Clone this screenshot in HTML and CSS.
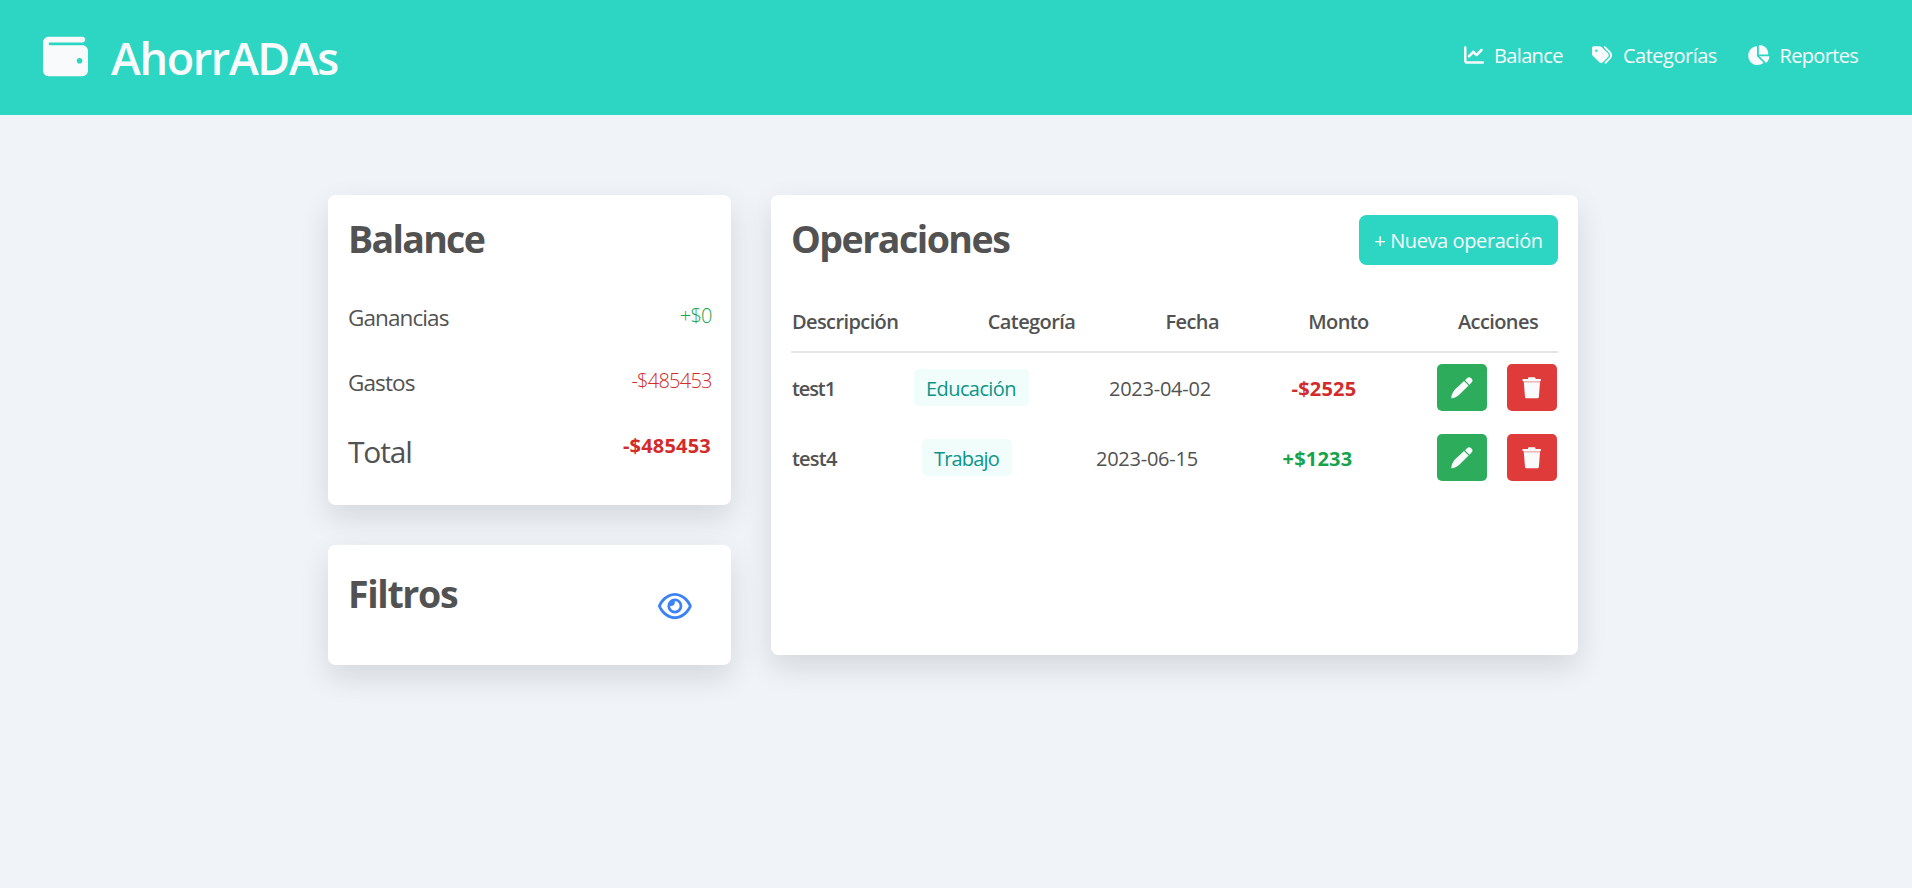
FILE: index.html
```html
<!DOCTYPE html>
<html lang="es">
<head>
<meta charset="utf-8">
<title>AhorrADAs</title>
<link rel="stylesheet" href="styles.css">
</head>
<body>
<svg class="sprite" aria-hidden="true">
  <symbol id="pencil" viewBox="0 0 22 22"><path d="M.3 21.2C.3 18.400 1.600 15.800 3.400 13.100L13 4 17.600 8.600 8 18.100C5.600 20.100 3 21.400.3 21.200zM14 3.200l2-2Q18-.8 20 1.100l.7.7Q22.400 3.700 20.600 5.500l-2.200 2.300z"/></symbol>
  <symbol id="trash" viewBox="0 0 20 22"><path d="M6 2V1.200Q6 .2 7 .2h5.500q1 0 1 1V2h4.600q1 0 1 1t-1 1H1.300q-1 0-1-1t1-1zM1.800 5.200h16.200l-1.100 14.500q-.1 1.500-1.600 1.500H4.600q-1.500 0-1.600-1.500z"/><path opacity=".65" d="M1.500 4h16.700v1.300H1.500z"/></symbol>
</svg>
<header class="header">
  <div class="brand">
    <svg class="brand-icon" viewBox="0 0 512 512"><path d="M64 32C28.700 32 0 60.700 0 96V416c0 35.300 28.700 64 64 64H448c35.300 0 64-28.700 64-64V192c0-35.300-28.700-64-64-64H80c-8.800 0-16-7.200-16-16s7.200-16 16-16H448c17.700 0 32-14.300 32-32s-14.300-32-32-32H64zM416 272a32 32 0 1 1 0 64 32 32 0 1 1 0-64z"/></svg>
    <h1 class="brand-name">AhorrADAs</h1>
  </div>
  <nav class="nav">
    <a class="nav-link nav-balance"><svg class="nav-icon" viewBox="0 0 512 512"><path d="M64 64c0-17.700-14.300-32-32-32S0 46.300 0 64V400c0 44.200 35.800 80 80 80H480c17.700 0 32-14.300 32-32s-14.300-32-32-32H80c-8.800 0-16-7.200-16-16V64zm406.600 86.600c12.500-12.500 12.500-32.800 0-45.300s-32.800-12.500-45.300 0L320 210.700l-57.400-57.400c-12.500-12.500-32.800-12.500-45.300 0l-112 112c-12.500 12.500-12.500 32.800 0 45.300s32.800 12.500 45.300 0L240 221.300l57.400 57.400c12.500 12.500 32.800 12.500 45.300 0l128-128z"/></svg><span>Balance</span></a>
    <a class="nav-link nav-categories"><svg class="nav-icon" viewBox="0 0 512 512"><path d="M345 39.100L472.800 168.400c52.400 53 52.400 138.200 0 191.200L360.800 472.900c-9.300 9.400-24.500 9.500-33.900 .2s-9.500-24.500-.2-33.900L438.600 325.900c33.900-34.300 33.900-89.400 0-123.700L310.900 72.900c-9.300-9.400-9.200-24.600 .2-33.900s24.600-9.200 33.900 .2zM0 229.500V80C0 53.500 21.500 32 48 32H197.500c17 0 33.300 6.700 45.300 18.700l168 168c25 25 25 65.500 0 90.500L277.300 442.700c-25 25-65.500 25-90.500 0l-168-168C6.700 262.700 0 246.500 0 229.500zM144 144a32 32 0 1 0 -64 0 32 32 0 1 0 64 0z"/></svg><span>Categorías</span></a>
    <a class="nav-link nav-reports"><svg class="nav-icon nav-icon-wide" viewBox="0 0 576 512"><path d="M304 240V16.600c0-9 7-16.600 16-16.600C443.700 0 544 100.300 544 224c0 9-7.600 16-16.600 16H304zM32 272C32 150.700 122.100 50.300 239 34.300c9.200-1.300 17 6.100 17 15.400V288L412.500 444.500c6.700 6.700 6.200 17.700-1.500 23.100C371.800 495.600 323.800 512 272 512C139.500 512 32 404.600 32 272zm526.400 16c9.300 0 16.600 7.800 15.400 17c-7.700 55.900-34.600 105.600-73.900 142.300c-6 5.600-15.400 5.200-21.200-.7L320 288H558.400z"/></svg><span>Reportes</span></a>
  </nav>
</header>
<main class="main">
  <div class="sidebar">
    <section class="card balance">
      <h2 class="title title-balance">Balance</h2>
      <div class="balance-row"><span class="label earnings">Ganancias</span><span class="amount light gain">+$0</span></div>
      <div class="balance-row"><span class="label expenses">Gastos</span><span class="amount light loss">-$485453</span></div>
      <div class="balance-row total-row"><span class="total">Total</span><span class="amount strong loss">-$485453</span></div>
    </section>
    <section class="card filters">
      <h2 class="title title-filters">Filtros</h2>
      <svg class="eye" viewBox="0 0 576 512"><path d="M288 80c-65.200 0-118.800 29.600-159.900 67.700C89.600 183.500 63 226 49.400 256c13.600 30 40.200 72.500 78.600 108.300C169.200 402.400 222.800 432 288 432s118.800-29.600 159.900-67.700C486.400 328.500 513 286 526.600 256c-13.600-30-40.200-72.500-78.600-108.300C406.800 109.600 353.200 80 288 80zM95.400 112.600C142.500 68.800 207.200 32 288 32s145.500 36.800 192.600 80.600c46.800 43.500 78.100 95.400 93 131.100c3.300 7.900 3.300 16.700 0 24.600c-14.900 35.700-46.200 87.700-93 131.100C433.500 443.200 368.800 480 288 480s-145.500-36.800-192.600-80.600C48.600 356 17.300 304 2.500 268.300c-3.300-7.900-3.300-16.700 0-24.600C17.300 208 48.600 156 95.400 112.600zM288 336c44.200 0 80-35.800 80-80s-35.800-80-80-80c-.7 0-1.300 0-2 0c1.300 5.100 2 10.500 2 16c0 35.300-28.700 64-64 64c-5.500 0-10.900-.7-16-2c0 .7 0 1.300 0 2c0 44.200 35.800 80 80 80zm0-208a128 128 0 1 1 0 256 128 128 0 1 1 0-256z"/></svg>
    </section>
  </div>
  <section class="card operations">
    <div class="operations-head">
      <h2 class="title title-operations">Operaciones</h2>
      <button class="new-button"><span>+ Nueva operación</span></button>
    </div>
    <div class="table-head">
      <span class="col-description">Descripción</span><span class="col-category">Categoría</span><span class="col-date">Fecha</span><span class="col-amount">Monto</span><span class="col-actions">Acciones</span>
    </div>
    <div class="table-row">
      <span class="name name-first">test1</span>
      <span class="tag tag-education"><span>Educación</span></span>
      <span class="date">2023-04-02</span>
      <span class="value value-loss loss">-$2525</span>
      <span class="actions"><button class="action edit"><svg class="pencil-icon"><use href="#pencil"/></svg></button><button class="action delete"><svg class="trash-icon"><use href="#trash"/></svg></button></span>
    </div>
    <div class="table-row">
      <span class="name name-second">test4</span>
      <span class="tag tag-work"><span>Trabajo</span></span>
      <span class="date">2023-06-15</span>
      <span class="value value-gain gain">+$1233</span>
      <span class="actions"><button class="action edit"><svg class="pencil-icon"><use href="#pencil"/></svg></button><button class="action delete"><svg class="trash-icon"><use href="#trash"/></svg></button></span>
    </div>
  </section>
</main>
</body>
</html>
```
FILE: styles.css
```css
* { box-sizing: border-box; }
body { margin: 0; min-height: 100vh; background: #f0f4f9; color: #525252; font: 400 20px/30px "Open Sans", "Noto Sans", sans-serif; }
h1, h2 { margin: 0; }
svg { display: block; fill: currentColor; flex: none; }
button { border: 0; padding: 0; font: inherit; color: #f8fafc; }
span { white-space: nowrap; }
.sprite { display: none; }

.header { height: 115px; padding: 0 53px 0 43px; display: flex; justify-content: space-between; background: #2dd6c2; color: #f8fafc; }
.brand { display: flex; gap: 23px; padding-top: 34px; }
.brand-icon { width: 45px; height: 45px; }
.brand-name { font-size: 45px; line-height: 50px; margin-top: -1px; font-weight: 600; letter-spacing: -1.35px; }
.nav { display: flex; padding-top: 40px; gap: 30px; }
.nav-link { display: flex; gap: 10px; }
.nav-link span { letter-spacing: -.65px; margin-top: 1px; }
.nav-categories span { letter-spacing: -.5px; margin-left: 1px; }
.nav-icon { width: 20px; height: 20px; margin-top: 5px; }
.nav-icon-wide { width: 22.5px; }
.nav-balance { width: 98px; }
.nav-categories { width: 125px; }
.nav-reports { width: 112px; }

.main { width: 1250px; margin: 80px 0 0 328px; display: flex; gap: 40px; align-items: flex-start; }
.sidebar { width: 403px; display: flex; flex-direction: column; gap: 40px; }
.card { background: #fff; border-radius: 7.5px; padding: 20px; box-shadow: 0 12px 30px rgba(0, 0, 0, .12); }
.title { font-size: 37.5px; line-height: 47px; font-weight: 700; }
.balance { height: 310px; }
.title-balance { margin-bottom: 38px; letter-spacing: -1.7px; }
.title-filters { letter-spacing: -1.35px; }
.title-operations { letter-spacing: -1.5px; }
.balance-row { display: flex; justify-content: space-between; height: 65px; }
.label { font-size: 22.5px; line-height: 35px; letter-spacing: -.9px; }
.total { font-size: 30px; line-height: 43px; letter-spacing: -1.2px; }
.amount { padding-top: 1px; }
.light { font-weight: 300; letter-spacing: -.75px; margin-right: -.75px; }
.strong, .value { font-weight: 700; letter-spacing: .2px; }
.gain { color: #16a34a; }
.loss { color: #d32a2a; }
.filters { height: 120px; display: flex; justify-content: space-between; padding: 25px 39px 20px 20px; }
.eye { width: 33.75px; height: 30px; margin-top: 21px; color: #3b82f6; }

.operations { width: 807px; height: 460px; }
.operations-head { display: flex; justify-content: space-between; height: 50px; }
.new-button { width: 199px; height: 50px; padding-top: 2px; border-radius: 7.5px; background: #2dd6c2; }
.new-button span { letter-spacing: -.4px; }
.table-head { display: flex; justify-content: space-between; margin-top: 30px; height: 58px; padding: 12px 19px 0 1px; border-bottom: 2px solid #e5e5e5; font-weight: 600; letter-spacing: -.6px; }
.col-description { width: 106px; }
.col-category { width: 88px; }
.col-date { width: 53px; }
.col-amount { width: 60px; }
.col-actions { width: 81px; }
.table-row { display: flex; align-items: center; justify-content: space-between; height: 47px; margin-top: 11px; padding: 0 1px; }
.table-row + .table-row { margin-top: 23px; }
.name { font-weight: 600; letter-spacing: -1.1px; }
.name, .date, .value { padding-top: 2px; }
.name-first { width: 41px; }
.name-second { width: 45px; letter-spacing: -.8px; }
.tag { height: 37px; padding-top: 2px; border-radius: 5px; background: #f0fdfa; color: #0d9488; display: flex; align-items: center; justify-content: center; }
.tag-education { width: 115px; letter-spacing: -.6px; }
.tag-work { width: 90px; letter-spacing: -.8px; }
.date { width: 102px; letter-spacing: -.25px; }
.value-loss { width: 65px; }
.value-gain { width: 70px; }
.actions { display: flex; gap: 20px; }
.action { width: 50px; height: 47px; border-radius: 5px; display: flex; align-items: center; justify-content: center; }
.edit { background: #2dac5c; }
.delete { background: #df3b3b; }
.pencil-icon { width: 22px; height: 22px; }
.trash-icon { width: 20px; height: 22px; }
```
